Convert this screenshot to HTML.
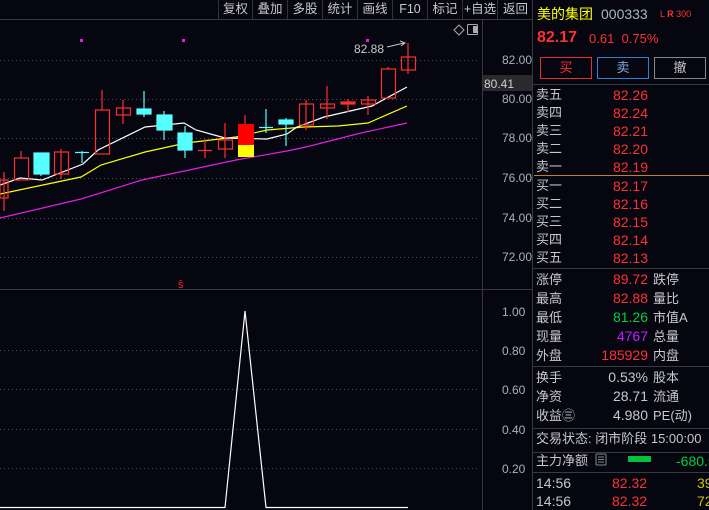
<!DOCTYPE html>
<html><head><meta charset="utf-8"><style>
body{margin:0;width:709px;height:510px;background:#05060f;overflow:hidden;font-family:"Liberation Sans","Noto Sans CJK SC",sans-serif;position:relative}
.t{position:absolute;white-space:nowrap;font-size:13px;line-height:16px}
.g{color:#c8c8c8}.r{color:#ff3232}.y{color:#ffff00}.gr{color:#00d040}.m{color:#c020ff}
.hl{position:absolute;left:532px;width:177px;height:1px;background:#3a3a3a}
.tb{position:absolute;top:0;height:19px;font-size:12.5px;line-height:19px;color:#c8c8c8;text-align:center;border-left:1px solid #333}
.rt{text-align:right}
</style></head><body>
<svg width="709" height="510" style="position:absolute;left:0;top:0">
<line x1="0" y1="19.5" x2="532" y2="19.5" stroke="#3a3a3a"/>
<line x1="482.5" y1="20" x2="482.5" y2="510" stroke="#3a3a3a"/>
<line x1="532.5" y1="0" x2="532.5" y2="510" stroke="#3a3a3a"/>
<line x1="0" y1="289.5" x2="532" y2="289.5" stroke="#3a3a3a"/>
<g stroke="#555" stroke-dasharray="1,3">
<line x1="0" y1="60.5" x2="480" y2="60.5"/><line x1="0" y1="99.5" x2="480" y2="99.5"/><line x1="0" y1="138.5" x2="480" y2="138.5"/><line x1="0" y1="178.5" x2="480" y2="178.5"/><line x1="0" y1="218.5" x2="480" y2="218.5"/><line x1="0" y1="257.5" x2="480" y2="257.5"/>
<line x1="0" y1="350.5" x2="480" y2="350.5"/><line x1="0" y1="389.5" x2="480" y2="389.5"/><line x1="0" y1="429.5" x2="480" y2="429.5"/><line x1="0" y1="468.5" x2="480" y2="468.5"/>
</g>
<rect x="483" y="75" width="49" height="16" fill="#2a2a2e"/>
<g font-family="Liberation Sans" font-size="12" fill="#a8b0bc">
<text x="502" y="64">82.00</text><text x="502" y="103">80.00</text><text x="502" y="142">78.00</text><text x="502" y="182">76.00</text><text x="502" y="222">74.00</text><text x="502" y="261">72.00</text>
<text x="484" y="88" fill="#d0d0d0">80.41</text>
<text x="502" y="316">1.00</text><text x="502" y="355">0.80</text><text x="502" y="394">0.60</text><text x="502" y="434">0.40</text><text x="502" y="473">0.20</text>
<text x="354" y="53" fill="#c8c8c8">82.88</text>
</g>
<path d="M387 47 L404 43 M400 41 L405 43 L401 46" stroke="#c8c8c8" fill="none"/>
<path d="M454 30 L459 25 L464 30 L459 35Z" stroke="#aaa" fill="none"/>
<rect x="467.5" y="24.5" width="10" height="10" rx="1" stroke="#aaa" fill="none"/><rect x="473" y="26" width="4" height="7" fill="#aaa"/>
<rect x="80" y="39" width="3" height="3" fill="#e020e0"/><rect x="182" y="39" width="3" height="3" fill="#e020e0"/><rect x="366" y="39" width="3" height="3" fill="#e020e0"/>
<g fill="none" stroke-width="1.2">
<polyline stroke="#e020e0" points="0,218 81,199 142,180 236,160 287,151 306,147 361,133 407,123 "/>
<polyline stroke="#ffff00" points="0,194 81,177 101,165 145,152 186,143 236,137 267,130 304,127 338,126 368,123 407,106"/>
<polyline stroke="#ffffff" points="0,185 20,178 42,180 83,164 98,150 145,127 184,123 196,130 225,138 267,139 287,134 297,127 324,117 372,106 407,87"/>
</g>
<g stroke="#ff3030" fill="none" stroke-width="1.2">
<path d="M4 172V211"/><rect x="0" y="180" width="8" height="18"/>
<path d="M21 151V158"/><rect x="14.5" y="158" width="14" height="22"/>
<path d="M61 149V179"/><rect x="54.5" y="152" width="14" height="22"/>
<path d="M102 90V110"/><rect x="95.5" y="110" width="14" height="44"/>
<path d="M123 100V124"/><rect x="116.5" y="108" width="14" height="7"/>
<path d="M205 139V158M198 150.5H212"/>
<path d="M225 123V158"/><rect x="218.5" y="140" width="14" height="9"/>
<path d="M245 115V124"/>
<path d="M306 100V130"/><rect x="299.5" y="104" width="14" height="21"/>
<path d="M327 86V119"/><rect x="320.5" y="104" width="14" height="4"/>
<path d="M348 99V112"/><rect x="341" y="102" width="14" height="2" fill="#ff3030"/>
<path d="M368 96V115"/><rect x="361.5" y="100" width="14" height="4"/>
<path d="M388 67V69"/><rect x="381.5" y="69" width="14" height="29"/>
<path d="M408 43V74"/><rect x="401.5" y="57" width="14" height="13"/>
</g>
<rect x="238" y="124" width="16" height="21" fill="#ff0000"/><rect x="238" y="145" width="16" height="12" fill="#ffff00"/>
<g stroke="#55ffff" fill="#55ffff" stroke-width="1.2">
<rect x="34" y="153" width="15" height="21"/><path d="M41 174V176"/>
<path d="M82 151V163M75 152.5H89"/>
<rect x="137" y="109" width="14" height="5"/><path d="M144 91V117"/>
<rect x="157" y="115" width="15" height="15"/><path d="M164 111V140"/>
<rect x="178" y="133" width="14" height="17"/><path d="M185 126V158"/>
<path d="M266 109V133M259 127.5H273"/>
<rect x="279" y="120" width="14" height="4"/><path d="M286 118V146"/>
</g>
<text x="178" y="288" font-size="11" fill="#ff2020" font-family="Liberation Sans">ŝ</text>
<polyline fill="none" stroke="#fff" stroke-width="1.2" points="0,507.5 225,507.5 245,311 266,507.5 408,507.5"/>
<rect x="628" y="456" width="23" height="6" fill="#00c040"/>
<rect x="596" y="454" width="10" height="11" rx="1" fill="none" stroke="#888"/>
<path d="M598 457H604M598 459.5H604M598 462H604" stroke="#888"/>
</svg>
<div class="tb" style="left:218px;width:33px">复权</div>
<div class="tb" style="left:252px;width:34px">叠加</div>
<div class="tb" style="left:287px;width:34px">多股</div>
<div class="tb" style="left:322px;width:34px">统计</div>
<div class="tb" style="left:357px;width:34px">画线</div>
<div class="tb" style="left:392px;width:34px">F10</div>
<div class="tb" style="left:427px;width:34px">标记</div>
<div class="tb" style="left:462px;width:34px">+自选</div>
<div class="tb" style="left:497px;width:35px">返回</div>

<div class="t y" style="left:537px;top:6px;font-size:14px">美的集团</div>
<div class="t" style="left:601px;top:6px;font-size:14px;color:#a8b8c8">000333</div>
<div class="t r" style="left:660px;top:6px;font-size:9px">L <b>R</b> 300</div>
<div class="t r" style="left:537px;top:30px;font-size:16px;font-weight:bold">82.17</div>
<div class="t r" style="left:589px;top:31px;font-size:13px">0.61&nbsp;&nbsp;0.75%</div>
<div style="position:absolute;left:540px;top:57px;width:50px;height:20px;border:1px solid #e03030;color:#ff3030;text-align:center;line-height:20px;font-size:13px">买</div>
<div style="position:absolute;left:597px;top:57px;width:50px;height:20px;border:1px solid #3080d0;color:#80a8e0;text-align:center;line-height:20px;font-size:13px">卖</div>
<div style="position:absolute;left:654px;top:57px;width:50px;height:20px;border:1px solid #888;color:#c8c8c8;text-align:center;line-height:20px;font-size:13px">撤</div>
<div class="hl" style="top:84px"></div>
<div class="hl" style="top:175px;background:#c08030;left:534px"></div>
<div class="hl" style="top:268px"></div>
<div class="hl" style="top:366px"></div>
<div class="hl" style="top:428px"></div>
<div class="hl" style="top:452px"></div>
<div class="hl" style="top:472px"></div>

<div class="t g" style="left:536px;top:86px;line-height:18px">卖五<br>卖四<br>卖三<br>卖二<br>卖一</div>
<div class="t r rt" style="left:580px;width:68px;top:86px;line-height:18px;font-size:14px">82.26<br>82.24<br>82.21<br>82.20<br>82.19</div>
<div class="t g" style="left:536px;top:177px;line-height:18px">买一<br>买二<br>买三<br>买四<br>买五</div>
<div class="t r rt" style="left:580px;width:68px;top:177px;line-height:18px;font-size:14px">82.17<br>82.16<br>82.15<br>82.14<br>82.13</div>

<div class="t g" style="left:536px;top:270px;line-height:19px">涨停<br>最高<br>最低<br>现量<br>外盘</div>
<div class="t rt" style="left:570px;width:78px;top:270px;line-height:19px;font-size:14px"><span class="r">89.72</span><br><span class="r">82.88</span><br><span class="gr">81.26</span><br><span class="m">4767</span><br><span class="r">185929</span></div>
<div class="t g" style="left:653px;top:270px;line-height:19px">跌停<br>量比<br>市值A<br>总量<br>内盘</div>

<div class="t g" style="left:536px;top:368px;line-height:19px">换手<br>净资<br>收益㊂</div>
<div class="t g rt" style="left:570px;width:78px;top:368px;line-height:19px;font-size:14px">0.53%<br>28.71<br>4.980</div>
<div class="t g" style="left:653px;top:368px;line-height:19px">股本<br>流通<br>PE(动)</div>

<div class="t g" style="left:536px;top:431px">交易状态: 闭市阶段 15:00:00</div>
<div class="t g" style="left:536px;top:453px">主力净额</div>
<div class="t gr" style="left:676px;top:453px;font-size:14px">-680.5</div>
<div class="t g" style="left:536px;top:474px;line-height:18px;font-size:14px">14:56<br>14:56</div>
<div class="t r" style="left:612px;top:474px;line-height:18px;font-size:14px">82.32<br>82.32</div>
<div class="t" style="left:697px;top:474px;line-height:18px;font-size:14px;color:#c8c800">39<br>72</div>
</body></html>
